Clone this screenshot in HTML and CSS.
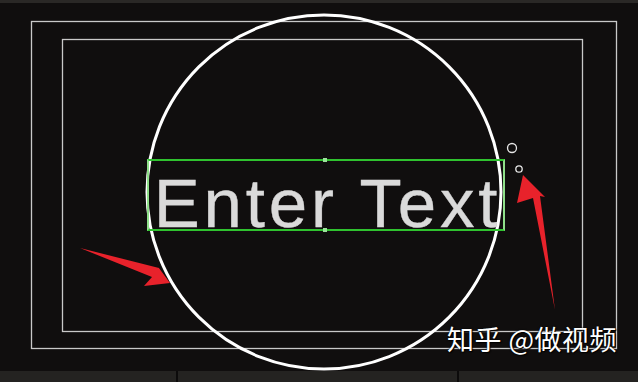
FILE: index.html
```html
<!DOCTYPE html>
<html>
<head>
<meta charset="utf-8">
<link rel="stylesheet" href="styles.css">
</head>
<body>
<div class="screen">
  <div class="topbar"></div>
  <div class="stage">
    <svg class="guides" viewBox="0 0 638 382" width="638" height="382">
      <rect x="31.5" y="21.5" width="585" height="327" fill="none" stroke="#c9c9c9" stroke-width="1.3"/>
      <rect x="62.5" y="39.5" width="520" height="292" fill="none" stroke="#c9c9c9" stroke-width="1.3"/>
      <circle cx="324" cy="192" r="177" fill="none" stroke="#ffffff" stroke-width="3"/>
      <circle cx="512" cy="148" r="4.5" fill="none" stroke="#e6e6e6" stroke-width="1.3"/>
      <circle cx="519" cy="169" r="3.2" fill="none" stroke="#e6e6e6" stroke-width="1.3"/>
      <polygon points="80,248 159,268 156,264 170,283 144,286 152,277" fill="#e8222b"/>
      <polygon points="555,310 540,196 545,197 523,175 517,203 533,198" fill="#e8222b"/>
    </svg>
    <div class="textbox">
      <span class="handle top"></span>
      <span class="handle bottom"></span>
      <span class="label">Enter Text</span>
    </div>
    <div class="watermark">知乎 @做视频</div>
  </div>
  <div class="bottombar">
    <div class="seg seg1"></div>
    <div class="seg seg2"></div>
    <div class="seg seg3"></div>
  </div>
</div>
</body>
</html>
```
FILE: styles.css
```css
html, body {
  margin: 0;
  padding: 0;
  background: #100e0e;
}
.screen {
  width: 638px;
  height: 382px;
  display: flex;
  flex-direction: column;
  overflow: hidden;
}
.topbar {
  height: 3px;
  background: #2a2826;
}
.stage {
  flex: 1;
  position: relative;
  background: #100e0e;
}
.guides {
  position: absolute;
  left: 0;
  top: -3px;
}
.textbox {
  position: absolute;
  left: 147px;
  top: 156px;
  width: 354px;
  height: 68px;
  border-top: 2px solid #2fc22f;
  border-bottom: 2px solid #2fc22f;
  border-left: 2px solid #8fe08a;
  border-right: 2px solid #8fe08a;
  display: flex;
  align-items: center;
  justify-content: center;
}
.label {
  font-family: "Liberation Sans", Arial, sans-serif;
  font-size: 69px;
  letter-spacing: 3.8px;
  color: #dadada;
  line-height: 1;
  margin-top: 16px;
  margin-left: 3px;
  white-space: nowrap;
  -webkit-text-stroke: 0.4px #dadada;
}
.handle {
  position: absolute;
  left: 174px;
  width: 4px;
  height: 4px;
  background: #9be39a;
}
.handle.top { top: -3px; }
.handle.bottom { bottom: -3px; }
.watermark {
  position: absolute;
  left: 447px;
  top: 320px;
  font-family: "Noto Sans CJK SC", sans-serif;
  font-size: 27px;
  letter-spacing: 0.5px;
  line-height: 32px;
  color: #ffffff;
  text-shadow: 0 0 2px #000, 1px 1px 1px #000;
  white-space: nowrap;
}
.bottombar {
  height: 11px;
  display: flex;
  gap: 2px;
  background: #0c0b0b;
}
.seg {
  background: #242321;
}
.seg1 { width: 176px; }
.seg2 { width: 279px; }
.seg3 { flex: 1; }
```
